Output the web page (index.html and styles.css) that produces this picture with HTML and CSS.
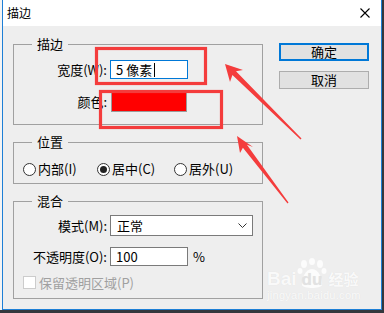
FILE: index.html
```html
<!DOCTYPE html>
<html lang="zh-CN">
<head>
    <meta charset="UTF-8">
    <meta name="viewport" content="width=device-width, initial-scale=1.0">
    <title>描边</title>
    <link rel="stylesheet" href="styles.css">
</head>
<body>
    <div class="window">
        <div class="titlebar">
            <span class="title">描边</span>
            <svg class="close" width="10" height="10" viewBox="0 0 10 10">
                <path d="M0.5 0.5 L9.5 9.5 M9.5 0.5 L0.5 9.5" stroke="#000" stroke-width="1.1" fill="none"/>
            </svg>
        </div>

        <div class="content">
            <div class="panels">
                <!-- 描边 -->
                <div class="group group-stroke">
                    <div class="group-title">描边</div>
                    <div class="row row-first">
                        <span class="field-label">宽度(W):</span>
                        <div class="textbox focused">5 像素<span class="caret"></span></div>
                    </div>
                    <div class="row row-color">
                        <span class="field-label">颜色:</span>
                        <div class="swatch"></div>
                    </div>
                </div>

                <!-- 位置 -->
                <div class="group group-position">
                    <div class="group-title">位置</div>
                    <div class="radios">
                        <span class="radio-item"><span class="radio"></span>内部(I)</span>
                        <span class="radio-item"><span class="radio checked"></span>居中(C)</span>
                        <span class="radio-item"><span class="radio"></span>居外(U)</span>
                    </div>
                </div>

                <!-- 混合 -->
                <div class="group group-blend">
                    <div class="group-title">混合</div>
                    <div class="row row-mode">
                        <span class="field-label">模式(M):</span>
                        <div class="dropdown">
                            <span>正常</span>
                            <svg width="9" height="5" viewBox="0 0 9 5">
                                <path d="M0.5 0.5 L4.5 4.5 L8.5 0.5" stroke="#333" stroke-width="1" fill="none"/>
                            </svg>
                        </div>
                    </div>
                    <div class="row row-opacity">
                        <span class="field-label">不透明度(O):</span>
                        <div class="textbox">100</div>
                        <span class="unit">%</span>
                    </div>
                    <div class="check-row">
                        <span class="checkbox"></span>保留透明区域(P)
                    </div>
                </div>
            </div>

            <div class="buttons">
                <div class="button default">确定</div>
                <div class="button">取消</div>
            </div>
        </div>
    </div>

    <div class="watermark">
        <div class="wm-logo">
            <span class="wm-bai">Bai</span>
            <span class="wm-du">
                <svg class="wm-paw" width="30" height="32" viewBox="0 0 30 32">
                    <ellipse cx="7" cy="6" rx="3" ry="4"/>
                    <ellipse cx="15" cy="3.5" rx="3" ry="3.5"/>
                    <ellipse cx="23" cy="6" rx="3" ry="4"/>
                    <ellipse cx="27" cy="13" rx="2.5" ry="3"/>
                    <ellipse cx="3" cy="13" rx="2.5" ry="3"/>
                    <path d="M15 11 C8 11 4 22 5 27 C6 31 24 31 25 27 C26 22 22 11 15 11 Z"/>
                </svg>
                <span class="wm-du-text">du</span>
            </span>
            <span class="wm-jy">经验</span>
        </div>
        <div class="wm-url">jingyan.baidu.com</div>
    </div>

    <svg class="annotations" width="384" height="313" viewBox="0 0 384 313">
        <rect x="96.5" y="48.5" width="109" height="35" fill="none" stroke="#f43c3c" stroke-width="3.2"/>
        <rect x="100.5" y="91.5" width="121" height="36" fill="none" stroke="#f43c3c" stroke-width="3.2"/>
        <polygon fill="#f43c3c" points="225,64 243,70 236,71.3 301.5,138.5 300.5,139.5 232.4,74.9 230,82"/>
        <polygon fill="#f43c3c" points="237,136 253,147 246.9,144.8 288.5,202.6 287.5,203.4 242.9,147.8 240,153"/>
    </svg>
</body>
</html>
```

FILE: styles.css
```css
body {
    margin: 0;
    width: 384px;
    height: 313px;
    position: relative;
    overflow: hidden;
    background-color: #34373d;
    font-family: "Noto Sans CJK SC", "Microsoft YaHei", sans-serif;
    font-size: 13px;
    color: #000;
}
.window {
    margin-left: 2px;
    width: 380px;
    height: 310px;
    box-sizing: border-box;
    border: 1px solid #1e7fd6;
    border-top: none;
    background-color: #eeeeee;
    box-shadow: -2px 0 0 #f4f4f4;
}
.titlebar {
    height: 26px;
    background-color: #fff;
    display: flex;
    align-items: center;
    justify-content: space-between;
    padding: 0 11px 0 4px;
}
.title {
    font-size: 12px;
    line-height: 16px;
}
.content {
    display: flex;
    gap: 16px;
    padding: 18px 0 0 10px;
}
.panels {
    width: 250px;
    display: flex;
    flex-direction: column;
    gap: 17px;
}
.group {
    box-sizing: border-box;
    border: 1px solid #a0a0a0;
    display: flex;
    flex-direction: column;
}
.group-title {
    align-self: flex-start;
    margin: -9px 0 0 18px;
    padding: 0 5px;
    line-height: 16px;
    background-color: #eeeeee;
}
.group-stroke {
    height: 81px;
}
.group-position {
    height: 42px;
}
.group-blend {
    height: 98px;
}
.row {
    display: flex;
    align-items: center;
    gap: 3px;
}
.field-label {
    width: 93px;
    text-align: right;
    line-height: 16px;
    white-space: nowrap;
}
.row-first {
    margin-top: 8px;
}
.row-color {
    margin-top: 13px;
}
.textbox {
    width: 78px;
    height: 19px;
    box-sizing: border-box;
    border: 1px solid #7a7a7a;
    background-color: #fff;
    padding-left: 5px;
    line-height: 17px;
    display: flex;
    align-items: center;
}
.textbox.focused {
    border-color: #0078d7;
}
.caret {
    width: 1px;
    height: 14px;
    margin-left: 2px;
    background-color: #000;
}
.swatch {
    margin-left: 1px;
    width: 76px;
    height: 20px;
    box-sizing: border-box;
    border: 1px solid #9a9a9a;
    background-color: #ff0000;
}
.radios {
    margin-top: 11px;
    padding-left: 9px;
    display: grid;
    grid-template-columns: 74px 77px auto;
    line-height: 16px;
}
.radio-item {
    display: flex;
    align-items: center;
    gap: 2px;
    white-space: nowrap;
}
.radio {
    width: 13px;
    height: 13px;
    box-sizing: border-box;
    border: 1px solid #333;
    border-radius: 50%;
    background-color: #fff;
    display: flex;
    align-items: center;
    justify-content: center;
}
.radio.checked::after {
    content: "";
    width: 7px;
    height: 7px;
    border-radius: 50%;
    background-color: #222;
}
.row-mode {
    margin-top: 6px;
}
.dropdown {
    width: 143px;
    height: 21px;
    box-sizing: border-box;
    border: 1px solid #7a7a7a;
    background-color: #fff;
    padding: 0 5px 0 6px;
    display: flex;
    align-items: center;
    justify-content: space-between;
    line-height: 17px;
}
.row-opacity {
    margin-top: 11px;
}
.unit {
    margin-left: 2px;
    line-height: 16px;
}
.check-row {
    margin-top: 10px;
    padding-left: 9px;
    display: flex;
    align-items: center;
    gap: 3px;
    height: 13px;
    color: #a0a0a0;
    line-height: 16px;
}
.checkbox {
    width: 13px;
    height: 13px;
    box-sizing: border-box;
    border: 1px solid #cccccc;
    background-color: #fff;
}
.buttons {
    margin-top: -1px;
    width: 90px;
    display: flex;
    flex-direction: column;
    gap: 10px;
}
.button {
    height: 18px;
    box-sizing: border-box;
    border: 1px solid #adadad;
    background-color: #e1e1e1;
    display: flex;
    align-items: center;
    justify-content: center;
    line-height: 16px;
}
.button.default {
    border: 2px solid #0078d7;
}
.watermark {
    position: absolute;
    left: 267px;
    top: 258px;
    color: rgba(255, 255, 255, 0.85);
    font-family: "Liberation Sans", Arial, sans-serif;
    text-shadow: 0 0 1px rgba(0, 0, 0, 0.08);
}
.wm-logo {
    display: flex;
    align-items: flex-end;
    height: 31px;
}
.wm-bai {
    font-size: 19px;
    font-weight: bold;
    line-height: 20px;
}
.wm-du {
    position: relative;
    width: 30px;
    height: 31px;
}
.wm-paw {
    position: absolute;
    left: 0;
    top: 0;
    fill: rgba(255, 255, 255, 0.8);
}
.wm-du-text {
    position: absolute;
    left: 5px;
    bottom: 0;
    font-size: 17px;
    font-weight: bold;
    line-height: 18px;
    color: rgba(225, 225, 225, 0.9);
}
.wm-jy {
    font-family: "Noto Sans CJK SC", sans-serif;
    font-size: 15px;
    font-weight: bold;
    line-height: 20px;
    margin-left: 2px;
}
.wm-url {
    font-size: 11px;
    line-height: 12px;
    letter-spacing: 0.3px;
}
.annotations {
    position: absolute;
    left: 0;
    top: 0;
}
```
